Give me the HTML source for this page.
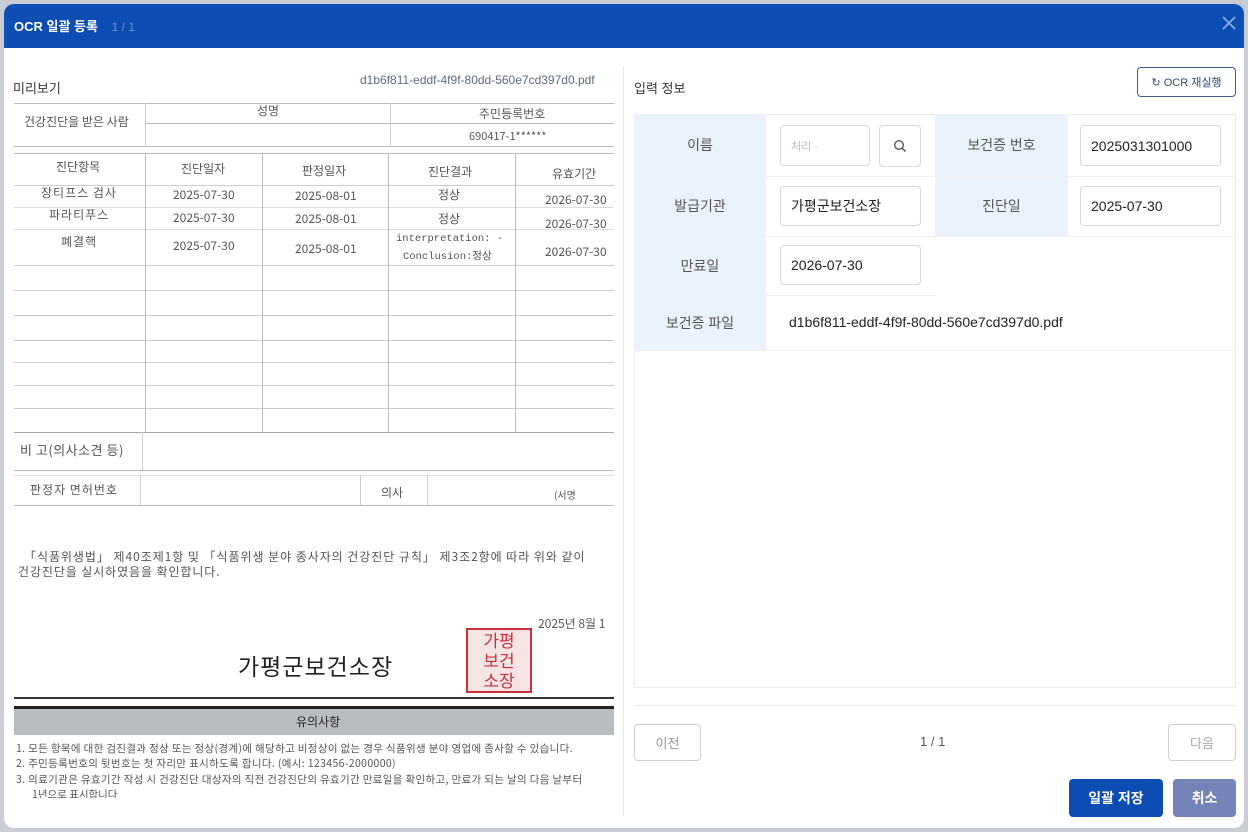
<!DOCTYPE html>
<html><head><meta charset="utf-8"><style>
*{margin:0;padding:0;box-sizing:border-box}
body{width:1248px;height:832px;background:#c9ccd2;font-family:"Liberation Sans","Noto Sans CJK KR",sans-serif;position:relative;overflow:hidden;color:#333}
.a{position:absolute}
.modal{left:4px;top:4px;width:1240px;height:824px;background:#fff;border-radius:10px;overflow:hidden}
.hd{left:0;top:0;width:1240px;height:44px;background:#0b4db3}
.doc{font-family:"Noto Sans CJK KR",sans-serif;color:#444}
.h{position:absolute;height:1px;background:#999}
.v{position:absolute;width:1px;background:#aaa}
.t{position:absolute;font-size:12px;white-space:nowrap;color:#555}
.lab{position:absolute;background:#eaf3fc;font-size:14px;color:#555;display:flex;align-items:center;justify-content:center}
.inp{position:absolute;border:1px solid #d5d9de;border-radius:4px;background:#fff;font-size:14px;color:#222;display:flex;align-items:center;padding-left:10px}
</style></head><body>
<div class="a modal">
 <div class="a hd"></div>
 <div class="a" style="left:10px;top:12px;font-size:13px;font-weight:bold;color:#fff">OCR 일괄 등록 <span style="color:#6f8fd0;font-weight:normal;font-size:12px;margin-left:10px">1 / 1</span></div>
 <svg class="a" style="left:1217px;top:11px" width="16" height="16"><path d="M2 2L14 14M14 2L2 14" stroke="#8fb0e6" stroke-width="1.6"/></svg>
</div>
<!-- left -->
<div class="a" style="left:13px;top:78px;font-size:13px;color:#333">미리보기</div>
<div class="a" style="left:360px;top:73px;font-size:12px;color:#5b6b80">d1b6f811-eddf-4f9f-80dd-560e7cd397d0.pdf</div>
<div class="a" style="left:623px;top:66px;width:1px;height:750px;background:#e3e6ea"></div>
<div class="a doc" style="left:14px;top:100px;width:600px;height:698px;background:#fff">
 <div class="h" style="left:0;top:3px;width:600px;background:#bbb"></div>
 <div class="h" style="left:131px;top:23px;width:469px;background:#bbb"></div>
 <div class="h" style="left:0;top:46px;width:600px;background:#bbb"></div>
 <div class="v" style="left:131px;top:3px;height:43px;background:#ccc"></div>
 <div class="v" style="left:376px;top:3px;height:43px;background:#ccc"></div>
 <div class="t" style="left:10px;top:13px">건강진단을 받은 사람</div>
 <div class="t" style="left:243px;top:2px">성명</div>
 <div class="t" style="left:465px;top:5px">주민등록번호</div>
 <div class="t" style="left:455px;top:28px;font-size:11px">690417-1******</div>
 <div class="h" style="left:0;top:53px;width:600px;background:#bbb"></div>
 <div class="h" style="left:0;top:85px;width:600px;background:#ccc"></div>
 <div class="h" style="left:0;top:107px;width:600px;background:#ddd"></div>
 <div class="h" style="left:0;top:129px;width:600px;background:#ddd"></div>
 <div class="h" style="left:0;top:165px;width:600px;background:#ccc"></div>
 <div class="h" style="left:0;top:190px;width:600px;background:#ccc"></div>
 <div class="h" style="left:0;top:215px;width:600px;background:#ccc"></div>
 <div class="h" style="left:0;top:240px;width:600px;background:#ccc"></div>
 <div class="h" style="left:0;top:262px;width:600px;background:#ccc"></div>
 <div class="h" style="left:0;top:285px;width:600px;background:#ccc"></div>
 <div class="h" style="left:0;top:308px;width:600px;background:#ccc"></div>
 <div class="h" style="left:0;top:332px;width:600px;background:#aaa"></div>
 <div class="v" style="left:131px;top:53px;height:279px;background:#bbb"></div>
 <div class="v" style="left:248px;top:53px;height:279px;background:#bbb"></div>
 <div class="v" style="left:374px;top:53px;height:279px;background:#bbb"></div>
 <div class="v" style="left:501px;top:53px;height:279px;background:#bbb"></div>
 <div class="t" style="left:42px;top:58px">진단항목</div>
 <div class="t" style="left:167px;top:60px">진단일자</div>
 <div class="t" style="left:288px;top:62px">판정일자</div>
 <div class="t" style="left:414px;top:63px">진단결과</div>
 <div class="t" style="left:538px;top:65px">유효기간</div>
 <div class="t" style="left:27px;top:84px;letter-spacing:1px">장티프스 검사</div>
 <div class="t" style="left:159px;top:86px">2025-07-30</div>
 <div class="t" style="left:281px;top:87px">2025-08-01</div>
 <div class="t" style="left:424px;top:86px">정상</div>
 <div class="t" style="left:531px;top:91px">2026-07-30</div>
 <div class="t" style="left:35px;top:106px;letter-spacing:1px">파라티푸스</div>
 <div class="t" style="left:159px;top:109px">2025-07-30</div>
 <div class="t" style="left:281px;top:110px">2025-08-01</div>
 <div class="t" style="left:424px;top:110px">정상</div>
 <div class="t" style="left:531px;top:115px">2026-07-30</div>
 <div class="t" style="left:47px;top:133px;letter-spacing:1px">폐결핵</div>
 <div class="t" style="left:159px;top:137px">2025-07-30</div>
 <div class="t" style="left:281px;top:140px">2025-08-01</div>
 <div class="t" style="left:382px;top:133px;font-size:11px;font-family:'Liberation Mono','Noto Sans CJK KR',monospace;font-size:10.5px">interpretation: -</div>
 <div class="t" style="left:389px;top:148px;font-size:10.5px;font-family:'Liberation Mono','Noto Sans CJK KR',monospace">Conclusion:정상</div>
 <div class="t" style="left:531px;top:143px">2026-07-30</div>
 <div class="v" style="left:128px;top:332px;height:38px;background:#ccc"></div>
 <div class="h" style="left:0;top:370px;width:600px;background:#bbb"></div>
 <div class="t" style="left:6px;top:340px;font-size:13px;letter-spacing:0.5px">비 고(의사소견 등)</div>
 <div class="h" style="left:0;top:375px;width:600px;background:#ddd"></div>
 <div class="h" style="left:0;top:405px;width:600px;background:#bbb"></div>
 <div class="v" style="left:126px;top:375px;height:30px;background:#ccc"></div>
 <div class="v" style="left:346px;top:375px;height:30px;background:#ccc"></div>
 <div class="v" style="left:413px;top:375px;height:30px;background:#ccc"></div>
 <div class="t" style="left:16px;top:381px;letter-spacing:1px">판정자 면허번호</div>
 <div class="t" style="left:367px;top:384px">의사</div>
 <div class="t" style="left:540px;top:387px;font-size:10px">(서명</div>
 <div class="t" style="left:10px;top:448px;font-size:12px;letter-spacing:0.95px">「식품위생법」 제40조제1항 및 「식품위생 분야 종사자의 건강진단 규칙」 제3조2항에 따라 위와 같이</div>
 <div class="t" style="left:4px;top:463px;font-size:12px;letter-spacing:0.9px">건강진단을 실시하였음을 확인합니다.</div>
 <div class="t" style="left:524px;top:515px;font-size:12px">2025년 8월 1</div>
 <div class="t" style="left:224px;top:548px;font-size:23px;color:#222;letter-spacing:1px">가평군보건소장</div>
 <div class="a" style="left:452px;top:528px;width:66px;height:65px;border:2px solid #c8313c;background:#f6e4e5;color:#c8313c;font-size:17px;line-height:20px;text-align:center">가평<br>보건<br>소장</div>
 <div class="h" style="left:0;top:597px;width:600px;height:2px;background:#333"></div>
 <div class="a" style="left:0;top:606px;width:600px;height:29px;background:#b9bcc0;border-top:3px solid #222"></div>
 <div class="t" style="left:282px;top:613px;color:#222">유의사항</div>
 <div class="t" style="left:2px;top:641px;font-size:10.5px;letter-spacing:0.35px">1. 모든 항목에 대한 검진결과 정상 또는 정상(경계)에 해당하고 비정상이 없는 경우 식품위생 분야 영업에 종사할 수 있습니다.</div>
 <div class="t" style="left:2px;top:656px;font-size:10.5px;letter-spacing:0.35px">2. 주민등록번호의 뒷번호는 첫 자리만 표시하도록 합니다. (예시: 123456-2000000)</div>
 <div class="t" style="left:2px;top:672px;font-size:10.5px;letter-spacing:0.35px">3. 의료기관은 유효기간 작성 시 건강진단 대상자의 직전 건강진단의 유효기간 만료일을 확인하고, 만료가 되는 날의 다음 날부터</div>
 <div class="t" style="left:18px;top:687px;font-size:10.5px;height:11px;overflow:hidden">1년으로 표시합니다</div>
</div>
<!-- right -->
<div class="a" style="left:634px;top:78px;font-size:13px;color:#333">입력 정보</div>
<div class="a" style="left:1137px;top:67px;width:99px;height:30px;border:1px solid #3a5f8f;border-radius:4px;font-size:11px;color:#2b4a78;display:flex;align-items:center;justify-content:center">↻&nbsp;OCR 재실행</div>
<div class="a" style="left:634px;top:114px;width:602px;height:574px;border:1px solid #e8ebef"></div>
<div class="lab" style="left:634px;top:114px;width:132px;height:62px">이름</div>
<div class="lab" style="left:634px;top:176px;width:132px;height:60px">발급기관</div>
<div class="lab" style="left:634px;top:236px;width:132px;height:59px">만료일</div>
<div class="lab" style="left:634px;top:295px;width:132px;height:55px">보건증 파일</div>
<div class="lab" style="left:935px;top:114px;width:133px;height:62px">보건증 번호</div>
<div class="lab" style="left:935px;top:176px;width:133px;height:60px">진단일</div>
<div class="a" style="left:766px;top:176px;width:470px;height:1px;background:#eef0f3"></div>
<div class="a" style="left:766px;top:236px;width:470px;height:1px;background:#eef0f3"></div>
<div class="a" style="left:766px;top:295px;width:170px;height:1px;background:#eef0f3"></div>
<div class="a" style="left:634px;top:350px;width:602px;height:1px;background:#eef0f3"></div>
<div class="inp" style="left:780px;top:125px;width:90px;height:41px;color:#bbb;font-size:11px">처리 ·</div>
<div class="inp" style="left:879px;top:125px;width:42px;height:42px;padding:0;justify-content:center"><svg width="14" height="14"><circle cx="6" cy="6" r="4.3" fill="none" stroke="#555" stroke-width="1.4"/><path d="M9.2 9.2L12.5 12.5" stroke="#555" stroke-width="1.5"/></svg></div>
<div class="inp" style="left:1080px;top:125px;width:141px;height:41px">2025031301000</div>
<div class="inp" style="left:780px;top:186px;width:141px;height:40px">가평군보건소장</div>
<div class="inp" style="left:1080px;top:186px;width:141px;height:40px">2025-07-30</div>
<div class="inp" style="left:780px;top:245px;width:141px;height:40px">2026-07-30</div>
<div class="a" style="left:789px;top:314px;font-size:14px;color:#222">d1b6f811-eddf-4f9f-80dd-560e7cd397d0.pdf</div>
<div class="a" style="left:634px;top:705px;width:602px;height:1px;background:#e8ebef"></div>
<div class="a" style="left:634px;top:724px;width:67px;height:37px;border:1px solid #cdd2d8;border-radius:4px;font-size:13px;color:#999;display:flex;align-items:center;justify-content:center">이전</div>
<div class="a" style="left:920px;top:734px;font-size:13px;color:#555">1 / 1</div>
<div class="a" style="left:1168px;top:724px;width:68px;height:37px;border:1px solid #cdd2d8;border-radius:4px;font-size:13px;color:#aaa;display:flex;align-items:center;justify-content:center">다음</div>
<div class="a" style="left:1069px;top:779px;width:94px;height:38px;background:#0b4db3;border-radius:4px;font-size:14px;font-weight:bold;color:#fff;display:flex;align-items:center;justify-content:center">일괄 저장</div>
<div class="a" style="left:1173px;top:779px;width:63px;height:38px;background:#7584b8;border-radius:4px;font-size:14px;font-weight:bold;color:#fff;display:flex;align-items:center;justify-content:center">취소</div>
</body></html>
